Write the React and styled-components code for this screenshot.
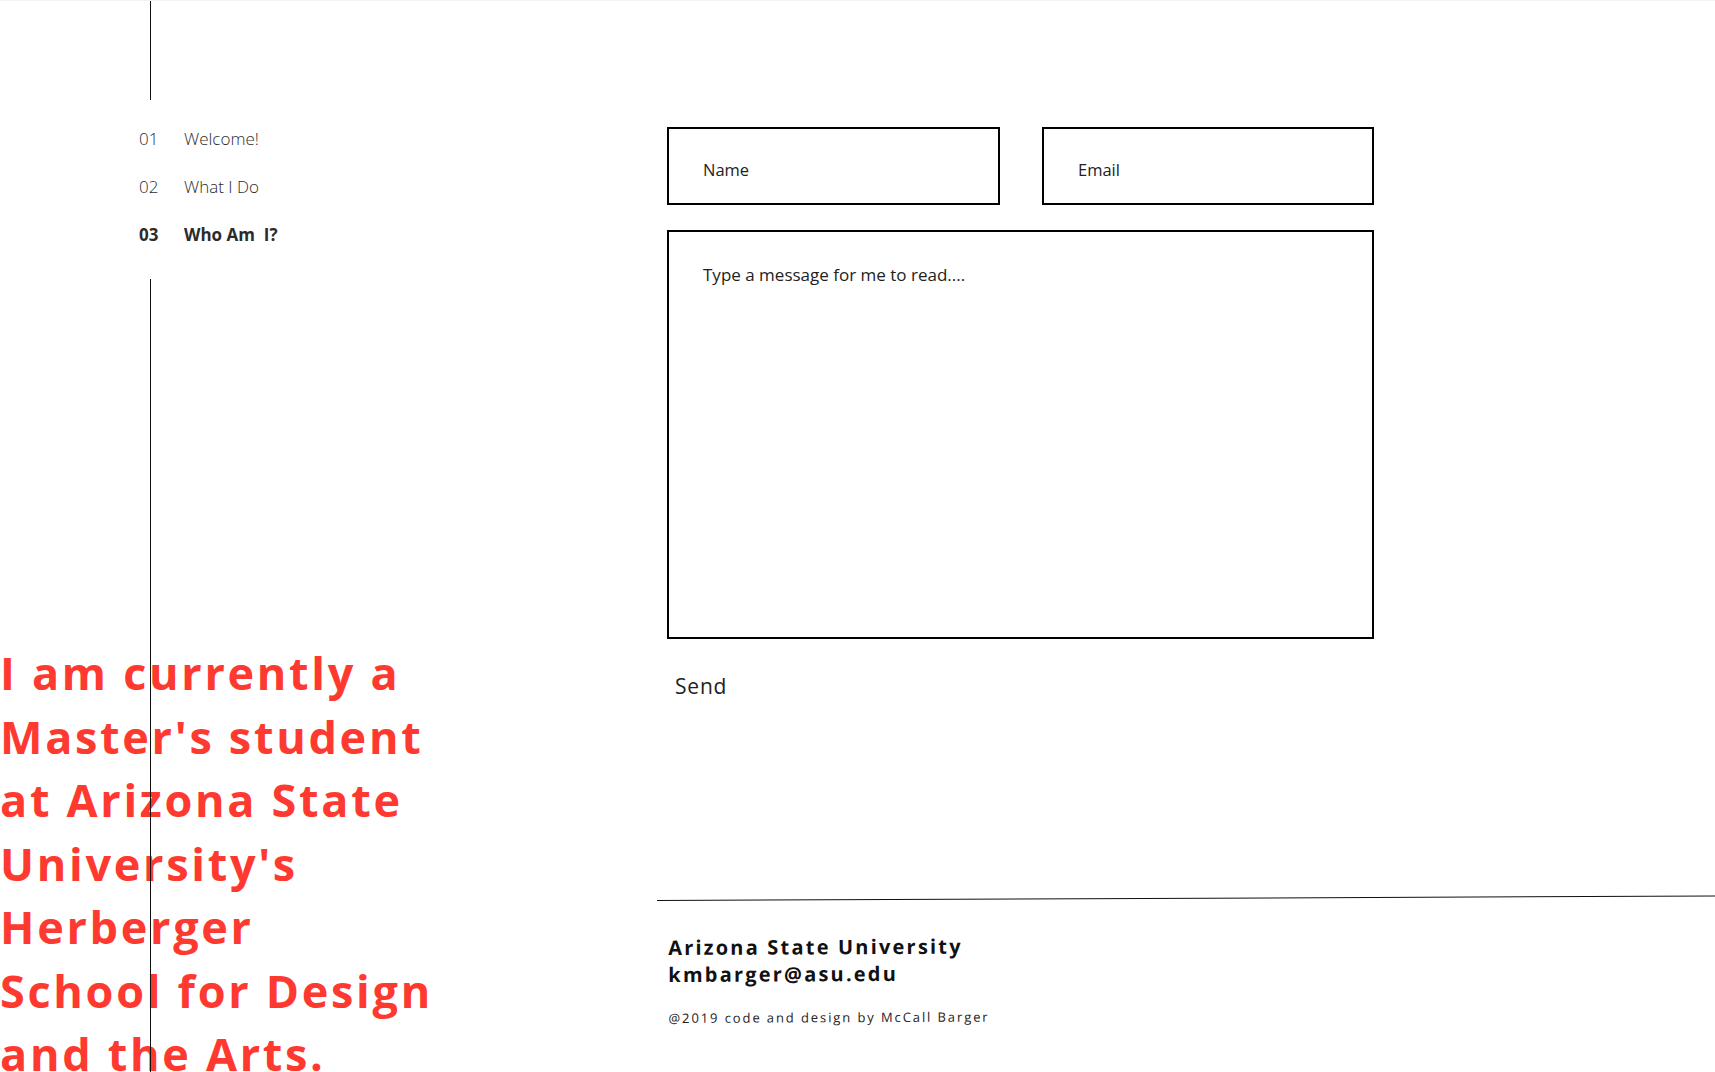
import React from 'react'
import styled, { createGlobalStyle } from 'styled-components'

const GlobalStyle = createGlobalStyle`
html, body {
  margin: 0;
  padding: 0;
  background: #fff;
  font-family: 'Open Sans', 'Noto Sans', sans-serif;
  color: #222;
}
* { box-sizing: border-box; }
`

const Page = styled.div`
position: relative;
height: 100vh;
overflow: hidden;
border-top: 1px solid #f3f3f3;
display: flex;
`

// fixed side rail, drawn over the page content
const Rail = styled.aside`
position: absolute;
top: 0;
left: 139px;
bottom: 0;
display: flex;
flex-direction: column;
z-index: 5;
pointer-events: none;
`
const RailLine = styled.div`
width: 1px;
margin-left: 11px;
background: #111;
height: ${props => (props.grow ? 'auto' : '99px')};
flex: ${props => (props.grow ? 1 : 'none')};
`
const Nav = styled.nav`
display: flex;
flex-direction: column;
padding: 14px 0 21px;
pointer-events: auto;
`
const NavItem = styled.a`
display: flex;
align-items: center;
height: 48px;
font-size: 17px;
font-weight: ${props => (props.active ? 700 : 300)};
color: #2b2b2b;
text-decoration: none;
white-space: pre;
cursor: pointer;

span:first-child {
  width: 45px;
}
`

const About = styled.section`
width: 657px;
flex: none;
padding-top: 640px;
`
const Statement = styled.h1`
margin: 0;
font-size: 45px;
font-weight: 700;
line-height: 63.5px;
letter-spacing: 2.7px;
color: #fe3a30;
white-space: nowrap;
`

const Contact = styled.section`
flex: 1;
display: flex;
flex-direction: column;
padding-top: 126px;
`
const Form = styled.form`
width: 707px;
margin-left: 10px;
display: grid;
grid-template-columns: 333px 332px;
column-gap: 42px;
row-gap: 25px;
`
const Field = styled.input`
height: 78px;
border: 2px solid #000;
padding: 6px 34px 0;
font-family: inherit;
font-size: 16.5px;
color: #222;
outline: none;

&::placeholder {
  color: #222;
}
`
const Message = styled.textarea`
grid-column: 1 / span 2;
height: 409px;
border: 2px solid #000;
padding: 31px 34px;
font-family: inherit;
font-size: 17px;
color: #222;
resize: none;
outline: none;

&::placeholder {
  color: #222;
}
`
const Send = styled.button`
justify-self: start;
grid-column: 1;
margin-top: 8px;
padding: 0 0 0 8px;
border: none;
background: none;
font-family: inherit;
font-size: 21px;
font-weight: 400;
letter-spacing: 0.8px;
color: #222;
cursor: pointer;
`

const Footer = styled.footer`
margin-top: 200px;
border-top: 1.5px solid #111;
transform: rotate(-0.24deg);
transform-origin: left top;
padding: 33px 0 0 11px;
width: calc(100% + 4px);
`
const FooterLine = styled.div`
font-size: 20px;
font-weight: 700;
line-height: 27px;
letter-spacing: 2.2px;
color: #111;
`
const Credit = styled.div`
margin-top: 21px;
font-size: 13px;
letter-spacing: 1.9px;
color: #222;
`

const navItems = [
  { num: '01', label: 'Welcome!' },
  { num: '02', label: 'What I Do' },
  { num: '03', label: 'Who Am  I?', active: true }
]

export default function App () {
  return (
    <>
      <GlobalStyle />
      <Page>
        <Rail>
          <RailLine />
          <Nav>
            {navItems.map(item => (
              <NavItem key={item.num} active={item.active ? 1 : 0}>
                <span>{item.num}</span>
                <span>{item.label}</span>
              </NavItem>
            ))}
          </Nav>
          <RailLine grow={1} />
        </Rail>

        <About>
          <Statement>
            I am currently a<br />
            Master's student<br />
            at Arizona State<br />
            University's<br />
            Herberger<br />
            School for Design<br />
            and the Arts.
          </Statement>
        </About>

        <Contact>
          <Form onSubmit={e => e.preventDefault()}>
            <Field type='text' placeholder='Name' />
            <Field type='email' placeholder='Email' />
            <Message placeholder='Type a message for me to read....' />
            <Send type='submit'>Send</Send>
          </Form>
          <Footer>
            <FooterLine>Arizona State University</FooterLine>
            <FooterLine>kmbarger@asu.edu</FooterLine>
            <Credit>@2019 code and design by McCall Barger</Credit>
          </Footer>
        </Contact>
      </Page>
    </>
  )
}
